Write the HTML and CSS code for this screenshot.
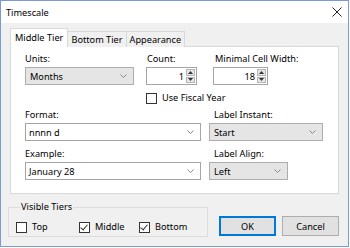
FILE: index.html
```html
<!DOCTYPE html>
<html lang="en">
<head>
    <meta charset="UTF-8">
    <title>Timescale</title>
    <link rel="stylesheet" href="styles.css">
</head>
<body>
    <div class="window">
        <div class="titlebar">
            <span class="title">Timescale</span>
            <svg class="close" width="10" height="10" viewBox="0 0 10 10">
                <path d="M0.5 0.5 L9.5 9.5 M9.5 0.5 L0.5 9.5" stroke="#222" stroke-width="1" fill="none"/>
            </svg>
        </div>

        <div class="client">
            <div class="tabs">
                <div class="tab active">Middle Tier</div>
                <div class="tab">Bottom Tier</div>
                <div class="tab">Appearance</div>
            </div>

            <div class="panel">
                <div class="row-top">
                    <div class="field f-units">
                        <label>Units:</label>
                        <div class="combo readonly">
                            <span>Months</span>
                            <svg class="chev" width="7" height="4" viewBox="0 0 7 4"><path d="M0.5 0.5 L3.5 3.5 L6.5 0.5" stroke="#888" fill="none"/></svg>
                        </div>
                    </div>
                    <div class="field f-count">
                        <label>Count:</label>
                        <div class="spin">
                            <span class="val">1</span>
                            <div class="spinbtns">
                                <div class="sb"><svg width="5" height="3" viewBox="0 0 5 3"><path d="M0 3 L2.5 0 L5 3 Z" fill="#333"/></svg></div>
                                <div class="sb"><svg width="5" height="3" viewBox="0 0 5 3"><path d="M0 0 L2.5 3 L5 0 Z" fill="#333"/></svg></div>
                            </div>
                        </div>
                    </div>
                    <div class="field f-min">
                        <label>Minimal Cell Width:</label>
                        <div class="spin">
                            <span class="val">18</span>
                            <div class="spinbtns">
                                <div class="sb"><svg width="5" height="3" viewBox="0 0 5 3"><path d="M0 3 L2.5 0 L5 3 Z" fill="#333"/></svg></div>
                                <div class="sb"><svg width="5" height="3" viewBox="0 0 5 3"><path d="M0 0 L2.5 3 L5 0 Z" fill="#333"/></svg></div>
                            </div>
                        </div>
                    </div>
                </div>

                <div class="check fiscal"><span class="box"></span>Use Fiscal Year</div>

                <div class="grid">
                    <div class="field">
                        <label>Format:</label>
                        <div class="combo">
                            <span>nnnn d</span>
                            <svg class="chev" width="7" height="4" viewBox="0 0 7 4"><path d="M0.5 0.5 L3.5 3.5 L6.5 0.5" stroke="#888" fill="none"/></svg>
                        </div>
                    </div>
                    <div class="field right">
                        <label>Label Instant:</label>
                        <div class="combo readonly w-instant">
                            <span>Start</span>
                            <svg class="chev" width="7" height="4" viewBox="0 0 7 4"><path d="M0.5 0.5 L3.5 3.5 L6.5 0.5" stroke="#888" fill="none"/></svg>
                        </div>
                    </div>
                    <div class="field">
                        <label>Example:</label>
                        <div class="combo">
                            <span>January 28</span>
                            <svg class="chev" width="7" height="4" viewBox="0 0 7 4"><path d="M0.5 0.5 L3.5 3.5 L6.5 0.5" stroke="#888" fill="none"/></svg>
                        </div>
                    </div>
                    <div class="field right">
                        <label>Label Align:</label>
                        <div class="combo readonly w-align">
                            <span>Left</span>
                            <svg class="chev" width="7" height="4" viewBox="0 0 7 4"><path d="M0.5 0.5 L3.5 3.5 L6.5 0.5" stroke="#888" fill="none"/></svg>
                        </div>
                    </div>
                </div>
            </div>

            <div class="bottom">
                <fieldset class="tiers">
                    <legend>Visible Tiers</legend>
                    <div class="check c-top"><span class="box"></span>Top</div>
                    <div class="check c-middle"><span class="box checked"></span>Middle</div>
                    <div class="check"><span class="box checked"></span>Bottom</div>
                </fieldset>
                <div class="buttons">
                    <button class="btn default">OK</button>
                    <button class="btn">Cancel</button>
                </div>
            </div>
        </div>
    </div>
</body>
</html>
```

FILE: styles.css
```css
body {
    margin: 0;
    padding: 0;
    background: #fff;
    font-family: "Noto Sans", "Open Sans", sans-serif;
    font-size: 9.2px;
    color: #000;
}

.window {
    width: 349px;
    height: 247px;
    box-sizing: border-box;
    border: 1px solid #7a9ad4;
    display: flex;
    flex-direction: column;
}

.titlebar {
    height: 22px;
    background: #fff;
    display: flex;
    align-items: center;
    justify-content: space-between;
    padding: 0 6px 0 5px;
}

.close {
    display: block;
}

.client {
    flex: 1;
    background: #f0f0f0;
    padding: 6px 9px 0 9px;
}

/* tabs */
.tabs {
    display: flex;
    align-items: flex-end;
    height: 18px;
    position: relative;
    z-index: 1;
    margin-bottom: -1px;
}

.tab {
    height: 16px;
    line-height: 15px;
    padding: 0 3px;
    box-sizing: border-box;
    border: 1px solid #d9d9d9;
    border-bottom: none;
    background: #f0f0f0;
    margin-left: -1px;
    white-space: nowrap;
}

.tab.active {
    height: 19px;
    line-height: 18px;
    background: #fff;
    padding: 0 4px;
    margin-left: 0;
    border-bottom: 1px solid #fff;
}

.panel {
    width: 329px;
    height: 148px;
    box-sizing: border-box;
    background: #fff;
    border: 1px solid #d9d9d9;
    padding: 6px 0 0 14px;
}

/* fields */
.field label {
    display: block;
    line-height: 12px;
    height: 12px;
    margin-bottom: 2px;
    white-space: nowrap;
}

.row-top {
    display: flex;
}

.f-units { width: 109px; margin-right: 12px; }
.f-count { width: 51px; margin-right: 16px; }
.f-count label { padding-left: 1px; }
.f-min { width: 55px; }
.f-min label { padding-left: 2px; }

.combo, .spin {
    height: 18px;
    box-sizing: border-box;
    border: 1px solid #a5a5a5;
    background: #fff;
    display: flex;
    align-items: center;
    justify-content: space-between;
    padding: 0 6px 0 3px;
}

.combo.readonly {
    background: #e5e5e5;
    border-color: #adadad;
    padding-left: 4px;
}

.chev {
    display: block;
}

.spin {
    padding: 1px;
    justify-content: flex-end;
}

.spin .val {
    padding-right: 2px;
}

.spinbtns {
    width: 9px;
    height: 14px;
    display: flex;
    flex-direction: column;
    gap: 1px;
}

.sb {
    flex: 1;
    background: #e6e6e6;
    border: 1px solid #b5b5b5;
    display: flex;
    align-items: center;
    justify-content: center;
}

.sb svg {
    display: block;
}

.check {
    display: flex;
    align-items: center;
    line-height: 12px;
}

.box {
    width: 9px;
    height: 9px;
    border: 1px solid #333;
    background: #fff;
    margin-right: 5px;
    position: relative;
}

.box.checked::after {
    content: "";
    position: absolute;
    left: 2px;
    top: 0px;
    width: 3px;
    height: 6px;
    border-right: 1px solid #333;
    border-bottom: 1px solid #333;
    transform: rotate(40deg);
}

.fiscal {
    margin: 7px 0 0 121px;
}

.grid {
    display: grid;
    grid-template-columns: 176px 1fr;
    column-gap: 8px;
    row-gap: 7px;
    margin-top: 5px;
}

.grid .field.right label {
    padding-left: 5px;
}

.w-instant { width: 114px; }
.w-align { width: 79px; }

/* bottom area */
.bottom {
    display: flex;
    align-items: flex-start;
    margin-top: 8px;
}

.tiers {
    width: 201px;
    height: 35px;
    box-sizing: border-box;
    margin: 0 0 0 -2px;
    padding: 6px 0 0 7px;
    border: 1px solid #dcdcdc;
    display: flex;
    align-items: center;
}

.tiers legend {
    padding: 0 1px;
    margin-left: 4px;
    line-height: 10px;
}

.c-top { width: 63px; }
.c-middle { width: 60px; }

.buttons {
    display: flex;
    gap: 6px;
    margin: 14px 0 0 11px;
}

.btn {
    width: 57px;
    height: 20px;
    font-family: inherit;
    font-size: inherit;
    background: #e1e1e1;
    border: 1px solid #adadad;
    padding: 0;
    color: #000;
}

.btn.default {
    border: 2px solid #0078d7;
}
```
